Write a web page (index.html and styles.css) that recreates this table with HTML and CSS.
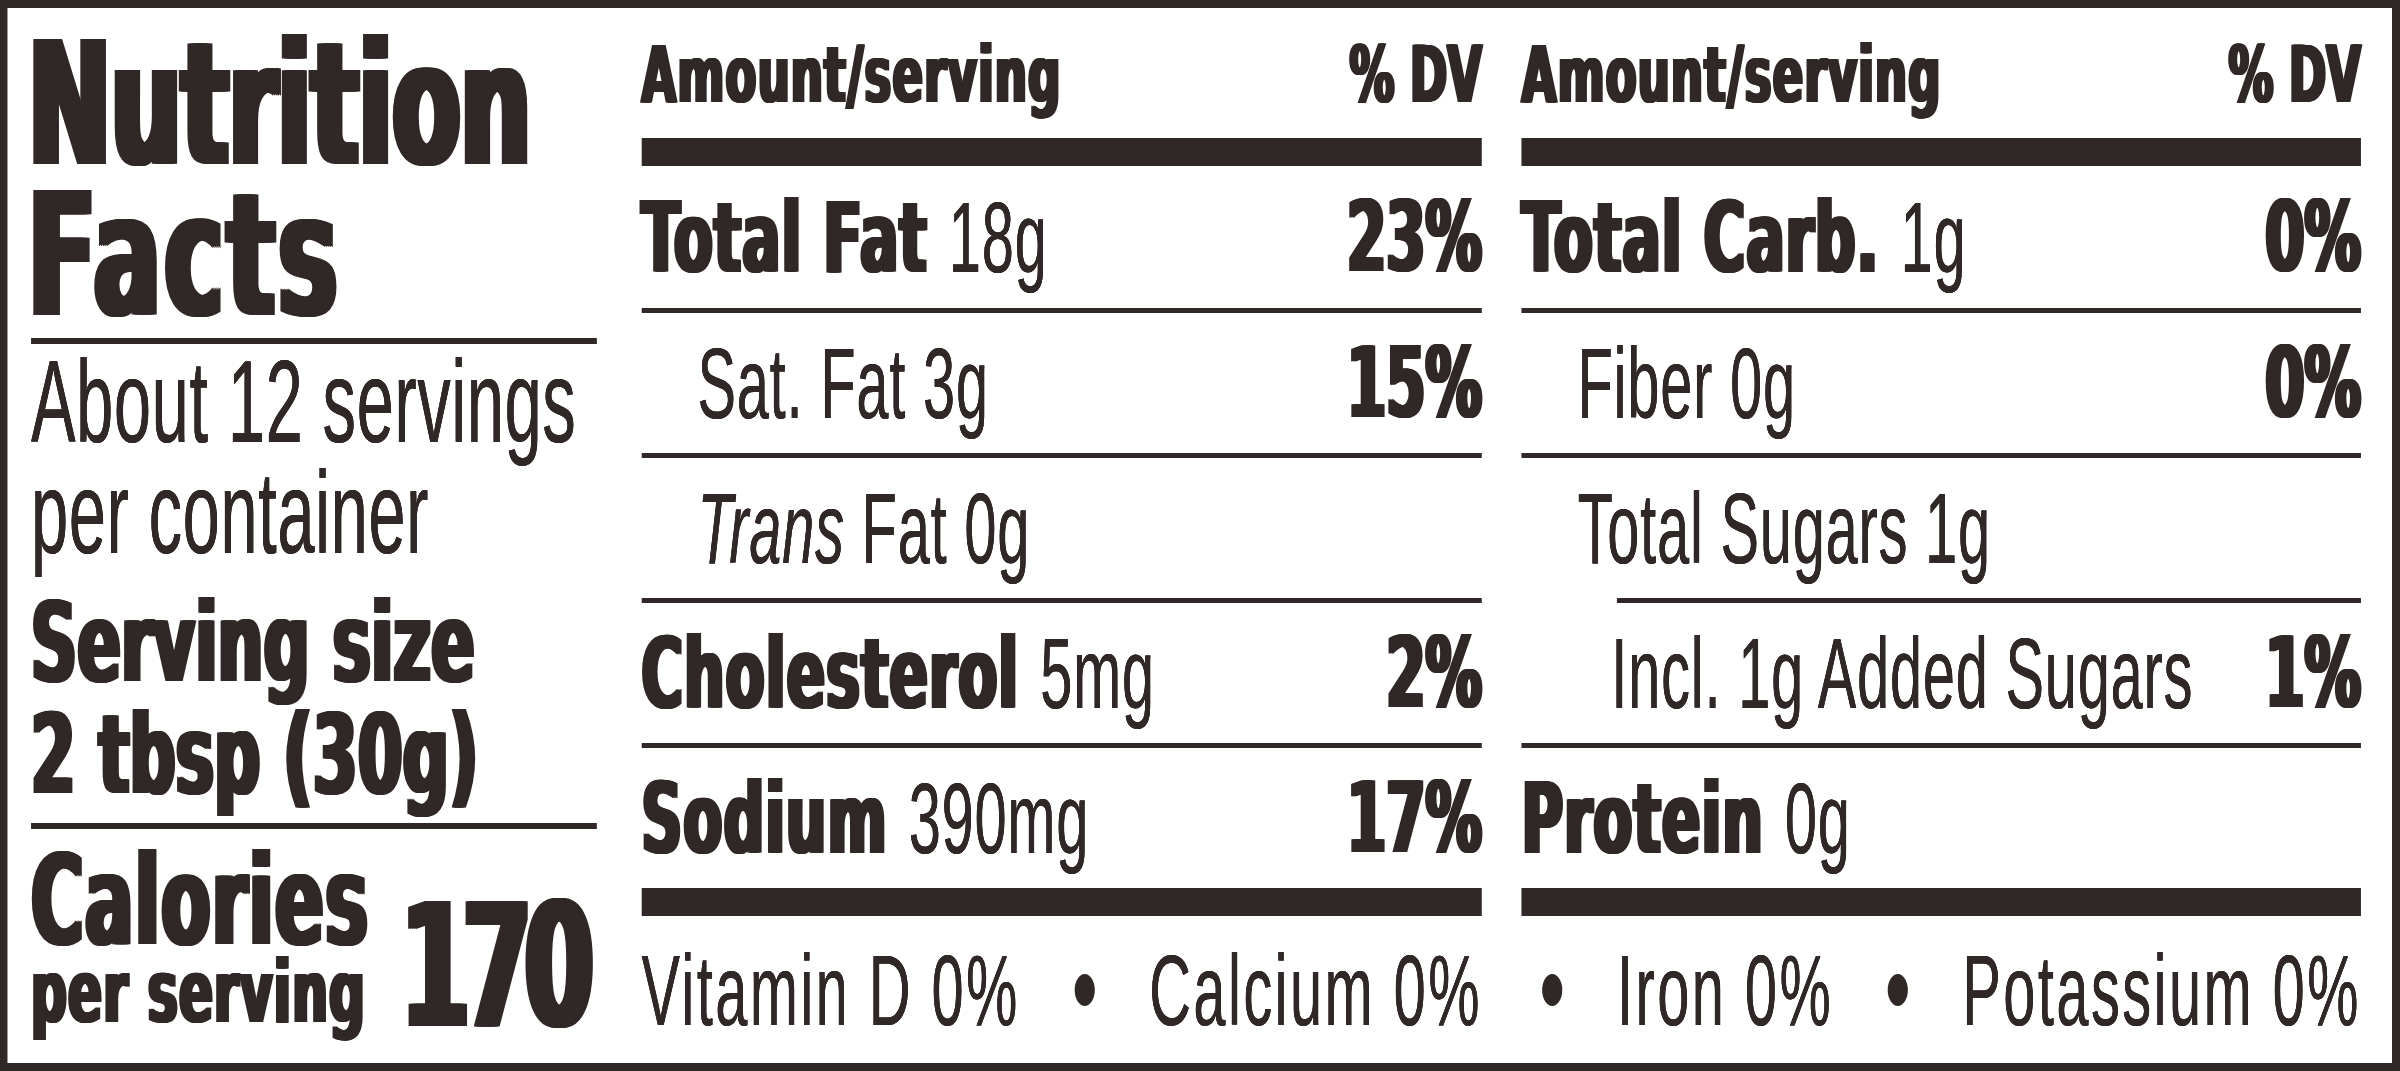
FILE: index.html
```html
<!DOCTYPE html>
<html lang="en">
<head>
<meta charset="utf-8">
<title>Nutrition Facts</title>
<link rel="stylesheet" href="styles.css">
</head>
<body>
<div class="page">
<div class="label">
  <section class="intro">
    <h1 class="title"><span class="line">Nutrition</span><span class="line line--wide">Facts</span></h1>
    <div class="rule rule--heavy rule--a"></div>
    <p class="servings"><span class="line">About 12 servings</span><span class="line">per container</span></p>
    <p class="size"><span class="line">Serving size</span><span class="line">2 tbsp (30g)</span></p>
    <div class="rule rule--heavy rule--b"></div>
    <div class="calories">
      <div class="cal-label">
        <span class="cal-word">Calories</span>
        <span class="cal-sub">per serving</span>
      </div>
      <span class="cal-num">170</span>
    </div>
  </section>

  <section class="col col--mid">
    <div class="head"><span class="head-label">Amount/serving</span><span>% DV</span></div>
    <div class="bar"></div>
    <div class="row row--first"><span class="name"><b>Total Fat </b>18g</span><b class="dv">23%</b></div>
    <div class="rule"></div>
    <div class="row"><span class="name sub">Sat. Fat 3g</span><b class="dv">15%</b></div>
    <div class="rule"></div>
    <div class="row"><span class="name sub"><i>Trans</i> Fat 0g</span></div>
    <div class="rule"></div>
    <div class="row"><span class="name"><b>Cholesterol </b>5mg</span><b class="dv">2%</b></div>
    <div class="rule"></div>
    <div class="row"><span class="name"><b>Sodium </b>390mg</span><b class="dv">17%</b></div>
    <div class="bar"></div>
  </section>

  <section class="col col--right">
    <div class="head"><span class="head-label">Amount/serving</span><span>% DV</span></div>
    <div class="bar"></div>
    <div class="row row--first"><span class="name"><b>Total Carb. </b>1g</span><b class="dv">0%</b></div>
    <div class="rule"></div>
    <div class="row"><span class="name sub">Fiber 0g</span><b class="dv">0%</b></div>
    <div class="rule"></div>
    <div class="row"><span class="name sub">Total Sugars 1g</span></div>
    <div class="rule rule--indent"></div>
    <div class="row"><span class="name sub2">Incl. 1g Added Sugars</span><b class="dv">1%</b></div>
    <div class="rule"></div>
    <div class="row"><span class="name"><b>Protein </b>0g</span></div>
    <div class="bar"></div>
  </section>

  <div class="vitamins vitamins--mid">
    <span>Vitamin D 0%</span>
    <span class="dot"></span>
    <span>Calcium 0%</span>
  </div>
  <div class="vitamins vitamins--right">
    <span class="dot"></span>
    <span>Iron 0%</span>
    <span class="dot"></span>
    <span>Potassium 0%</span>
  </div>
</div>
</div>
</body>
</html>
```

FILE: styles.css
```css
html, body {
  margin: 0;
  padding: 0;
  overflow: hidden;
  background: #ffffff;
}

.page {
  width: 2400px;
  height: 1071px;
  overflow: hidden;
}

/* The whole label is laid out wide and condensed horizontally,
   like the condensed typeface of a printed label. */
.label {
  box-sizing: border-box;
  width: 4174px;
  height: 1071px;
  border: 8px solid #302826;
  border-left-width: 13px;
  border-right-width: 14px;
  padding-left: 41px;
  padding-right: 53.9px;
  transform: scaleX(0.575);
  transform-origin: 0 0;
  display: grid;
  grid-template-columns: 984.3px 77.4px 1461.7px 69px 1459.7px;
  grid-template-rows: 908px 147px;
  color: #302826;
  font-family: "Liberation Sans", Arial, sans-serif;
  background: #ffffff;
  text-shadow: 0.012em 0 0 currentColor, -0.012em 0 0 currentColor;
}

b,
.title,
.size,
.cal-word,
.cal-sub,
.cal-num,
.head {
  font-family: "DejaVu Sans", sans-serif;
  font-weight: 700;
  text-shadow:
    0.02em 0 0 currentColor,
    -0.02em 0 0 currentColor,
    0.04em 0 0 currentColor,
    -0.04em 0 0 currentColor;
}

.line {
  display: block;
}

/* ---------- left column ---------- */
.intro {
  grid-column: 1;
  grid-row: 1 / 3;
  display: flex;
  flex-direction: column;
}

.title {
  margin: 21.3px 0 0 -5px;
  font-size: 172px;
  line-height: 151px;
}

.line--wide {
  letter-spacing: 0.04em;
}

.rule {
  height: 5px;
  background: #302826;
  flex: none;
}

.rule--heavy {
  height: 6px;
}

.rule--a {
  margin-top: 7px;
}

.rule--b {
  margin-top: 12px;
}

.servings {
  margin: 3px 0 0;
  font-size: 116px;
  line-height: 111px;
  letter-spacing: 0.01em;
}

.size {
  margin: 18px 0 0;
  font-size: 111px;
  line-height: 112px;
  letter-spacing: 0.008em;
}

.calories {
  margin-top: 20px;
  display: flex;
  justify-content: space-between;
  align-items: flex-end;
}

.cal-label {
  display: flex;
  flex-direction: column;
}

.cal-word {
  font-size: 124px;
  line-height: 104px;
  letter-spacing: 0.025em;
}

.cal-sub {
  font-size: 87px;
  line-height: 79px;
  letter-spacing: 0.025em;
}

.cal-num {
  font-size: 172px;
  line-height: 130px;
  letter-spacing: -0.07em;
  margin-right: 18px;
}

/* ---------- nutrient columns ---------- */
.col {
  grid-row: 1;
  display: flex;
  flex-direction: column;
}

.col--mid {
  grid-column: 3;
}

.col--right {
  grid-column: 5;
}

.head {
  box-sizing: border-box;
  height: 130px;
  padding-top: 4px;
  display: flex;
  justify-content: space-between;
  align-items: center;
  font-size: 78px;
  line-height: 1;
}

.head-label {
  letter-spacing: 0.029em;
}

.bar {
  height: 28px;
  background: #302826;
  flex: none;
}

.row {
  height: 140px;
  flex: none;
  display: flex;
  justify-content: space-between;
  align-items: center;
  font-size: 100px;
  line-height: 1;
}

.row--first {
  height: 142px;
}

.name {
  letter-spacing: 0.016em;
}

.row b {
  font-size: 98px;
}

.name b {
  letter-spacing: 0.025em;
}

.sub {
  padding-left: 97.4px;
}

.sub2 {
  padding-left: 156px;
}

.rule--indent {
  margin-left: 165.7px;
}

/* ---------- vitamins ---------- */
.vitamins {
  grid-row: 2;
  display: flex;
  justify-content: space-between;
  align-items: center;
  font-size: 100px;
  line-height: 1;
  letter-spacing: 0.045em;
}

.vitamins--mid {
  grid-column: 3;
}

.vitamins--right {
  grid-column: 5;
  padding-left: 36px;
}

.dot {
  width: 35px;
  height: 32px;
  border-radius: 50%;
  background: #302826;
}
```
